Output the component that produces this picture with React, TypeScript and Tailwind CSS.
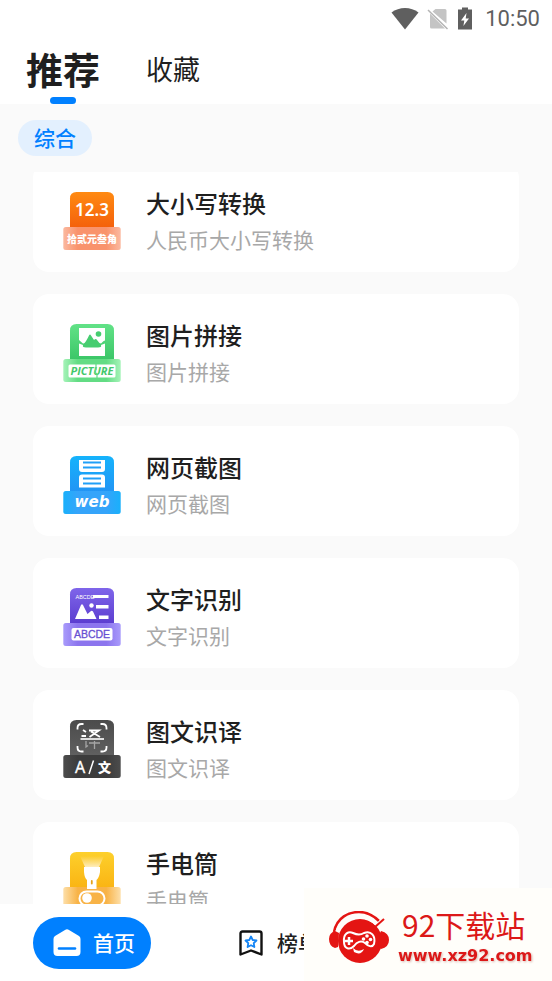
import React, { useState } from "react";

const cjk = "font-['Noto_Sans_CJK_SC',sans-serif]";

function StatusBar() {
    return (
        <div className="flex h-[38px] items-center justify-end pr-3 text-[#5f5f5f]">
            <svg className="mr-2 h-6 w-7" viewBox="0 0 28 24" fill="currentColor">
                <path d="M14 22.5 L0.5 5.5 C8 -0.5 20 -0.5 27.5 5.5 Z" />
            </svg>
            <svg className="mr-2 h-6 w-[22px]" viewBox="0 0 22 24">
                <path d="M8.5 2 H18 Q19.5 2 19.5 3.5 V16.5 L5.5 4.5 Z M3 6.5 L18 21.5 H4.5 Q3 21.5 3 20 Z" fill="#c4c4c4" />
                <path d="M1 3 L20.5 22" stroke="#b4b4b4" strokeWidth="1.5" />
            </svg>
            <svg className="mr-3 h-6 w-4" viewBox="0 0 16 24">
                <path d="M5 0.5 H11 V2.5 H15 V22.5 H1 V2.5 H5 Z" fill="#5f5f5f" />
                <path d="M9.5 6 L4 13.5 H7.3 L6.4 19 L12 11.5 H8.7 Z" fill="#fff" />
            </svg>
            <span className="font-[Roboto,sans-serif] text-[22px] leading-6">10:50</span>
        </div>
    );
}

interface ToolIconProps {
    id: string;
    top: string;
    bottom: string;
    baseEdge: string;
    baseMid: string;
    children: React.ReactNode;
}

// All tool icons share the same body standing on a wider base plate
function ToolIcon({ id, top, bottom, baseEdge, baseMid, children }: ToolIconProps) {
    return (
        <svg className="h-[58px] w-[58px] shrink-0" viewBox="0 0 58 58" aria-hidden="true">
            <defs>
                <linearGradient id={`${id}-body`} x1="0" y1="0" x2="0" y2="1">
                    <stop offset="0" stopColor={top} />
                    <stop offset="1" stopColor={bottom} />
                </linearGradient>
                <linearGradient id={`${id}-base`} x1="0" y1="0" x2="1" y2="0">
                    <stop offset="0" stopColor={baseEdge} />
                    <stop offset="0.25" stopColor={baseMid} />
                    <stop offset="0.75" stopColor={baseMid} />
                    <stop offset="1" stopColor={baseEdge} />
                </linearGradient>
            </defs>
            <path d="M7 36 V6.5 Q7 0 13.5 0 H44.5 Q51 0 51 6.5 V36 Z" fill={`url(#${id}-body)`} />
            <rect x="0.3" y="35" width="57.4" height="23" rx="2.5" fill={`url(#${id}-base)`} />
            {children}
        </svg>
    );
}

const tools = [
    {
        title: "大小写转换",
        desc: "人民币大小写转换",
        icon: (
            <ToolIcon id="money" top="#ff8a12" bottom="#f4600b" baseEdge="#fbb9a0" baseMid="#f9936c">
                <text x="29" y="24" textAnchor="middle" fontSize="17" fontWeight="600" fill="#fff" fontFamily="Noto Sans, sans-serif">12.3</text>
                <text x="29" y="51" textAnchor="middle" fontSize="10" fontWeight="900" fill="#fff" fontFamily="Noto Sans CJK SC, sans-serif">拾贰元叁角</text>
            </ToolIcon>
        ),
    },
    {
        title: "图片拼接",
        desc: "图片拼接",
        icon: (
            <ToolIcon id="picture" top="#62e287" bottom="#3bc667" baseEdge="#a5f3b8" baseMid="#63dc84">
                <path d="M16 4 H42 V17 Q42 15.500 38 19.500 H20 L16 16 Z" fill="#fff" />
                <circle cx="35.5" cy="10" r="2.8" fill="#46cd70" />
                <path d="M20.5 20 Q23 18 26 11.5 Q27 9.500 28 11.5 L31 16 Q33 14 34 16 Q36 19 38 20 Q39 23.5 35 23.5 H23 Q20 23.5 20.5 20 Z" fill="#46cd70" />
                <path d="M16 32 V19.5 L20 21 Q19 23.5 23 23.5 H35 Q39 23.5 38 21 L42 19.5 V32 Z" fill="#fff" />
                <rect x="5.5" y="40.5" width="47" height="13" rx="1.5" fill="#fff" />
                <text x="29" y="51" textAnchor="middle" fontSize="11" fontWeight="700" fontStyle="italic" fill="#43c86b" fontFamily="Open Sans, sans-serif">PICTURE</text>
                <path d="M33 39 V45 L31.5 48 L34 50 V55" fill="none" stroke="#63dc84" strokeWidth="1.2" />
            </ToolIcon>
        ),
    },
    {
        title: "网页截图",
        desc: "网页截图",
        icon: (
            <ToolIcon id="web" top="#15b3fc" bottom="#2294f4" baseEdge="#19b0fb" baseMid="#35a4fa">
                <path d="M16 4 H42 V13 Q42 16 39 16 H19 Q16 16 16 13 Z M19 18.5 H39 Q42 18.5 42 21.5 V31.5 H16 V21.5 Q16 18.5 19 18.5 Z" fill="#fff" />
                <path d="M20 6.5 H38 M20 11.5 H38 M20 22.5 H38 M20 27.5 H38" stroke="#219ff7" strokeWidth="2" />
                <text x="29" y="51" textAnchor="middle" fontSize="15" fontWeight="700" fontStyle="italic" fill="#fff" fontFamily="DejaVu Sans, sans-serif">web</text>
            </ToolIcon>
        ),
    },
    {
        title: "文字识别",
        desc: "文字识别",
        icon: (
            <ToolIcon id="ocr" top="#7f65ea" bottom="#5b3dcf" baseEdge="#a99bfb" baseMid="#8c75ee">
                <text x="12.5" y="10.5" fontSize="5.5" fill="#fff" fontFamily="Liberation Sans, sans-serif">ABCDE</text>
                <path d="M30 7 H45.5 V10 H30 Z M33 17 H45.5 V20.5 H33 Z M36 27.5 H45.5 V31 H36 Z" fill="#fff" />
                <circle cx="28.5" cy="17.5" r="2.2" fill="#fff" />
                <path d="M12 31 L18 17 Q19 15.5 20 17 L24.5 26 L28 23 Q29 22.3 30 23.5 L33.5 31 Z" fill="#fff" />
                <rect x="8.5" y="40" width="41" height="12.5" rx="2" fill="#fff" />
                <text x="29" y="50" textAnchor="middle" fontSize="10.5" fill="#6850d2" stroke="#6850d2" strokeWidth="0.3" fontFamily="Liberation Sans, sans-serif">ABCDE</text>
            </ToolIcon>
        ),
    },
    {
        title: "图文识译",
        desc: "图文识译",
        icon: (
            <ToolIcon id="translate" top="#4b4b4b" bottom="#606060" baseEdge="#4c4c4c" baseMid="#3c3c3c">
                <path d="M14.5 9.5 V8 Q14.5 4 18.5 4 H20.5 M37.5 4 H39.5 Q43.5 4 43.5 8 V9.5 M14.5 26 V27.5 Q14.5 31.5 18.5 31.5 H20.5 M37.5 31.5 H39.5 Q43.5 31.5 43.5 27.5 V26" fill="none" stroke="#fff" strokeWidth="1.8" />
                <path d="M20 10 L23 12 M18.5 16 H23 M26 10.5 H36 L26.5 17 M28 11.5 L37 17" fill="none" stroke="#fff" strokeWidth="1.8" />
                <path d="M17.5 19 H41" stroke="#fff" strokeWidth="1.6" />
                <path d="M23 21 V27 L25 25.5 M26 23 H37 M31.5 21 V29" fill="none" stroke="#a5a5a5" strokeWidth="1.3" />
                <text x="12" y="52.5" fontSize="16" fill="#fff" stroke="#fff" strokeWidth="0.3" fontFamily="Noto Sans, sans-serif">A</text>
                <path d="M30.5 40.5 L26 54" stroke="#fff" strokeWidth="1.5" />
                <text x="35" y="52" fontSize="13" fontWeight="900" fill="#fff" fontFamily="Noto Sans CJK SC, sans-serif">文</text>
            </ToolIcon>
        ),
    },
    {
        title: "手电筒",
        desc: "手电筒",
        icon: (
            <ToolIcon id="torch" top="#fdd02c" bottom="#fab413" baseEdge="#fddfa9" baseMid="#f8b347">
                <defs>
                    <linearGradient id="beam" x1="0" y1="0" x2="0" y2="1">
                        <stop offset="0" stopColor="#fff" stopOpacity="0" />
                        <stop offset="1" stopColor="#fff" stopOpacity="0.7" />
                    </linearGradient>
                </defs>
                <path d="M17 4 H41 L36 15 H22 Z" fill="url(#beam)" />
                <path d="M21 15 H37 V20 Q36 26 33.5 28 V37 H24 V28 Q21.5 26 21 20 Z" fill="#fff" />
                <path d="M28.8 29 V31.5" stroke="#e5a31c" strokeWidth="1.8" strokeLinecap="round" />
                <rect x="16.5" y="39.5" width="25" height="14" rx="7" fill="none" stroke="#fff" strokeWidth="2" />
                <circle cx="24" cy="46" r="4.8" fill="#fff" />
            </ToolIcon>
        ),
    },
];

function Watermark() {
    return (
        <div className="absolute right-0 bottom-0 flex h-[93px] w-[248px] items-center gap-2 bg-[#fffefa] pt-1.5 pl-6 text-[#dc1818]">
            <svg className="h-[54px] w-[62px] shrink-0" viewBox="0 0 62 54" aria-hidden="true">
                <path d="M6 21 C9 6 21 1 31 1 C40 1 46 5 51 10" fill="none" stroke="#e41513" strokeWidth="2.5" />
                <circle cx="32" cy="30" r="22" fill="#e41513" />
                <path d="M8 23 C12 10 23 5.5 31 5.5 C40 5.5 45 10 49 14 L57 6" fill="none" stroke="#fffefa" strokeWidth="3" />
                <path d="M7 20 Q1 22 1 28 Q1 35 7 37 L10 36 L11 22 Z M53 20 Q61 22 61 29 Q61 36 53 38 L50 36 L52 22 Z" fill="#e41513" />
                <path d="M47 16 L56 8" stroke="#e41513" strokeWidth="2" />
                <path d="M16 31 C15 22 21 20 25 22 C29 24 33 24 36 22 C43 19 48 25 46 33 C44 37 40 35 37 32 C33 29 29 31 26 35 C21 40 16 37 16 31 Z" fill="#e41513" stroke="#fff" strokeWidth="2" />
                <path d="M17 30 H25 M21 26 V34" stroke="#fff" strokeWidth="2.5" />
                <g fill="#fff">
                    <circle cx="39" cy="25" r="1.8" />
                    <circle cx="35.5" cy="28" r="1.8" />
                    <circle cx="42.5" cy="28.5" r="1.8" />
                    <circle cx="39" cy="31.5" r="1.8" />
                </g>
                <path d="M25 37 Q30 42 36 38 Q33 45 26 41 Z" fill="#fff" />
            </svg>
            <div>
                <div className={`${cjk} pl-1 text-[30px] leading-8`}>92下载站</div>
                <div className="mt-1 font-['DejaVu_Sans',sans-serif] text-base leading-6 font-bold drop-shadow-[1px_1px_1px_#d9b8b0]">www.xz92.com</div>
            </div>
        </div>
    );
}

export default function App() {
    const [tab, setTab] = useState("推荐");

    return (
        <div className={`${cjk} relative flex h-screen flex-col overflow-hidden bg-[#fafafa] text-[#1f1f1f]`}>
            <header className="h-[104px] shrink-0 bg-white">
                <StatusBar />
                <nav className="flex h-[66px] items-center gap-[46px] pl-[26px]">
                    {["推荐", "收藏"].map((name) => (
                        <button
                            key={name}
                            onClick={() => setTab(name)}
                            className={
                                tab === name
                                    ? "relative h-full pb-1 text-[37px] leading-[62px] font-bold after:absolute after:bottom-0 after:left-1/2 after:h-[7px] after:w-[26px] after:-translate-x-1/2 after:rounded-full after:bg-[#0080ff]"
                                    : "h-full pb-1 text-[27px] leading-[62px]"
                            }
                        >
                            {name}
                        </button>
                    ))}
                </nav>
            </header>

            <div className="flex h-[68px] shrink-0 items-center px-[18px]">
                <button className="h-9 rounded-full bg-[#e3f0fe] px-4 pb-0.5 text-[21px] leading-8 font-medium text-[#0080ff]">综合</button>
            </div>

            <main className="min-h-0 flex-1 overflow-hidden px-[33px]">
                <ul className="-mt-2.5 flex flex-col gap-[22px]">
                    {tools.map((tool) => (
                        <li key={tool.title} className="flex h-[110px] shrink-0 items-center gap-[25px] rounded-2xl bg-white px-[30px] pt-2">
                            {tool.icon}
                            <div>
                                <h2 className="text-[24px] leading-[37px] font-medium">{tool.title}</h2>
                                <p className="text-[21px] leading-[37px] text-[#a8a8a8]">{tool.desc}</p>
                            </div>
                        </li>
                    ))}
                </ul>
            </main>

            <footer className="flex h-[77px] shrink-0 items-center gap-[86px] bg-white pl-[33px] text-[21px] font-medium">
                <button className="flex h-[52px] w-[118px] items-center gap-3 rounded-full bg-[#0080ff] pl-5 text-white">
                    <svg className="h-7 w-7" viewBox="0 0 28 28" aria-hidden="true">
                        <path d="M12 1 Q14 -0.3 16 1 L26 7 Q27.5 8 27.5 10 V23 Q27.5 27 23.5 27 H4.5 Q0.5 27 0.5 23 V10 Q0.5 8 2 7 Z" fill="#fff" />
                        <path d="M6 19.5 H22" stroke="#0080ff" strokeWidth="2.6" strokeLinecap="round" />
                    </svg>
                    首页
                </button>
                <button className="flex items-center gap-3">
                    <svg className="h-7 w-7" viewBox="0 0 28 28" fill="none" aria-hidden="true">
                        <path d="M5.5 2.5 H22.5 Q24.5 2.5 24.5 4.5 V25.5 L14 21.5 L3.5 25.5 V4.5 Q3.5 2.5 5.5 2.5 Z" stroke="#111" strokeWidth="2.4" strokeLinejoin="round" />
                        <path d="M14 7.5 L15.7 11 L19.5 11.5 L16.7 14.2 L17.4 18 L14 16.2 L10.6 18 L11.3 14.2 L8.5 11.5 L12.3 11 Z" stroke="#1585f5" strokeWidth="1.8" strokeLinejoin="round" />
                    </svg>
                    榜单
                </button>
            </footer>

            <Watermark />
        </div>
    );
}
